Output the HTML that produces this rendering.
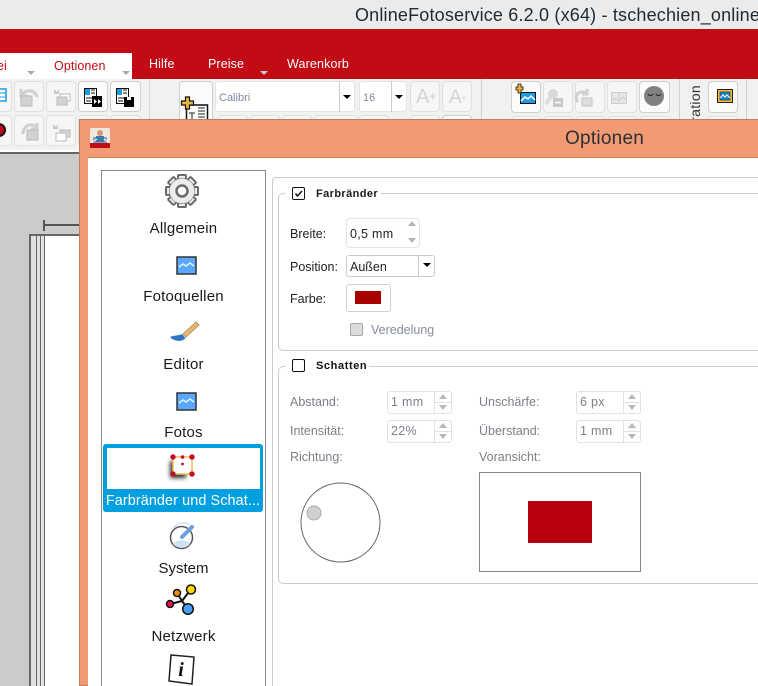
<!DOCTYPE html>
<html><head><meta charset="utf-8"><title>Optionen</title>
<style>
html,body{margin:0;padding:0;width:758px;height:686px;overflow:hidden}
body{position:relative;background:#cbcbcb;font-family:"Liberation Sans",sans-serif;color:#222}
#r{position:absolute;left:0;top:0;width:758px;height:686px;overflow:hidden;background:#cbcbcb}
#r div,#r svg{position:absolute;box-sizing:border-box}
.t{white-space:nowrap;line-height:16px;height:16px;font-size:12.5px}
.g{color:#7c8088}
.b{background:#f6f6f6;border:1px solid #e0e0e0;border-radius:4px}
.b2{background:#fbfbfb;border:1px solid #cfcfcf;border-radius:4px}
.item{white-space:nowrap;line-height:18px;height:18px;font-size:15px;text-align:center;left:102px;width:163px;color:#1a1a1a;letter-spacing:.2px}
.spin{background:#fff;border:1px solid #e2e2e2;border-radius:3px;height:23px;width:65px}
.grp{border:1px solid #ccc;border-radius:5px;left:278px;width:500px}
.cb{width:13px;height:13px;border:1.5px solid #111;border-radius:2px;background:#fff;left:292px}
.leg{background:#fff;height:14px}
</style></head><body><div id="r">
<div style="left:0;top:0;width:758px;height:29px;background:#ebebeb"></div>
<div class="t" style="left:355px;top:6px;height:18px;line-height:18px;font-size:18px;color:#1f2a33;letter-spacing:.18px">OnlineFotoservice 6.2.0 (x64) - tschechien_online</div>
<div style="left:0;top:29px;width:758px;height:50px;background:#c30b15"></div>
<div style="left:0;top:53px;width:132px;height:26px;background:#fff"></div>
<div class="t" style="left:-3px;top:58px;color:#c30b15;letter-spacing:.1px">ei</div>
<div class="t" style="left:54px;top:58px;color:#c30b15;letter-spacing:.1px">Optionen</div>
<div class="t" style="left:149px;top:56px;color:#fff;letter-spacing:.1px">Hilfe</div>
<div class="t" style="left:208px;top:56px;color:#fff;letter-spacing:.1px">Preise</div>
<div class="t" style="left:287px;top:56px;color:#fff;letter-spacing:.15px">Warenkorb</div>
<svg style="left:0;top:68px" width="280" height="9"><path d="M27 3h8l-4 4zM122 3h8l-4 4z" fill="#aaa"/><path d="M260 3h8l-4 4z" fill="#c9c9c9"/></svg>

<div style="left:0;top:79px;width:758px;height:71px;background:#f1f1f1"></div>
<div style="left:0;top:150px;width:79px;height:2px;background:#fff"></div>
<div style="left:0;top:152px;width:79px;height:2px;background:#666"></div>
<div style="left:149px;top:79px;width:1px;height:40px;background:#d8d8d8"></div>
<div style="left:481px;top:79px;width:1px;height:40px;background:#d0d0d0"></div>
<div style="left:679px;top:79px;width:1px;height:40px;background:#d0d0d0"></div>
<div style="left:746px;top:79px;width:1px;height:40px;background:#d0d0d0"></div>

<div class="b" style="left:-4px;top:81px;width:16px;height:31px"></div>
<div class="b" style="left:14px;top:81px;width:30px;height:31px"></div>
<div class="b" style="left:46px;top:81px;width:30px;height:31px"></div>
<div class="b2" style="left:78px;top:81px;width:30px;height:31px"></div>
<div class="b2" style="left:110px;top:81px;width:31px;height:31px"></div>
<div class="b" style="left:-4px;top:115px;width:16px;height:31px"></div>
<div class="b" style="left:14px;top:115px;width:30px;height:31px"></div>
<div class="b" style="left:46px;top:115px;width:30px;height:31px"></div>
<div class="b" style="left:78px;top:115px;width:30px;height:31px"></div>
<div class="b" style="left:110px;top:115px;width:31px;height:31px"></div>
<svg style="left:0;top:80px" width="145" height="70">
<path d="M0 9h6v12H0" fill="#fff" stroke="#1c9be0" stroke-width="1.5"/><path d="M0 13h6M0 17h6" stroke="#1c9be0"/>
<path d="M21 9v7h7M22 15c3-6 13-6 15 2" fill="none" stroke="#cfcfcf" stroke-width="3"/><rect x="21" y="16" width="11" height="10" fill="#d2d2d2" stroke="#bbb"/>
<rect x="60" y="14" width="10" height="7" fill="#fff" stroke="#bbb"/><rect x="57" y="17" width="10" height="8" fill="#d4d4d4" stroke="#bbb"/><path d="M54 9l3 3 2-3v5h-5z" fill="#c8c8c8"/>
<rect x="84.500" y="8.500" width="12" height="15" fill="#fff" stroke="#111"/><rect x="85" y="9" width="5" height="6" fill="#1c9be0"/><path d="M91 10h4M91 13h4M86 18h6M86 21h5" stroke="#111"/><rect x="92" y="16" width="10" height="11" fill="#000"/><path d="M94 19l3 2.500-3 2.500zM98 19l3 2.500-3 2.500z" fill="#fff"/>
<rect x="116.500" y="8.500" width="12" height="15" fill="#fff" stroke="#111"/><rect x="117" y="9" width="5" height="6" fill="#1c9be0"/><path d="M123 10h4M123 13h4M118 18h6M118 21h5" stroke="#111"/><rect x="124" y="17" width="10" height="10" fill="#000"/><rect x="127" y="17" width="4" height="3" fill="#fff"/>
<circle cx="-1" cy="50" r="6" fill="#c30b15" stroke="#111" stroke-width="2"/>
<path d="M23 54c0-9 9-12 14-6M37 43v6h-6" fill="none" stroke="#cfcfcf" stroke-width="3"/><rect x="27" y="50" width="11" height="10" fill="#d2d2d2" stroke="#bbb"/>
<rect x="60" y="50" width="10" height="7" fill="#d4d4d4" stroke="#bbb"/><rect x="56" y="53" width="10" height="8" fill="#fff" stroke="#bbb"/><path d="M53 44l3 3 2-3v5h-5z" fill="#c8c8c8"/>
</svg>

<div class="b2" style="left:179px;top:81px;width:34px;height:60px"></div>
<svg style="left:180px;top:96px" width="32" height="24">
<rect x="6.500" y="9" width="21" height="16" fill="#fff" stroke="#111" stroke-width="1.500"/><path d="M18 12h7M18 15h7M18 18h7M18 21h7M9 17h6M12 17v6" stroke="#222"/>
<path d="M5.500 1h4v4h4v4h-4v4h-4v-4h-4v-4h4z" fill="#f0b83a" stroke="#111" stroke-width="1.200"/>
</svg>
<div style="left:215px;top:81px;width:140px;height:31px;background:#fff;border:1px solid #e4e4e4;border-radius:3px"></div>
<div style="left:339px;top:81px;width:1px;height:31px;background:#ccc"></div>
<div class="t" style="left:219px;top:90px;font-size:11px;color:#8188a0">Calibri</div>
<div style="left:359px;top:81px;width:48px;height:31px;background:#fff;border:1px solid #e4e4e4;border-radius:3px"></div>
<div style="left:391px;top:81px;width:1px;height:31px;background:#ccc"></div>
<div class="t" style="left:363px;top:90px;font-size:11px;color:#8188a0">16</div>
<svg style="left:340px;top:90px" width="70" height="12"><path d="M3 5h8l-4 4zM55 5h8l-4 4z" fill="#000"/></svg>
<div class="b" style="left:410px;top:81px;width:30px;height:31px"></div>
<div class="b" style="left:442px;top:81px;width:30px;height:31px"></div>
<div class="t" style="left:416px;top:87px;height:20px;line-height:20px;font-size:20px;color:#d4d4d4">A<span style="font-size:11px;font-weight:bold;vertical-align:3px">+</span></div>
<div class="t" style="left:449px;top:87px;height:20px;line-height:20px;font-size:19px;color:#d4d4d4">A<span style="font-size:12px;font-weight:bold;vertical-align:2px">-</span></div>
<div class="b" style="left:218px;top:115px;width:30px;height:31px"></div>
<div class="b" style="left:250px;top:115px;width:30px;height:31px"></div>
<div class="b" style="left:282px;top:115px;width:30px;height:31px"></div>
<div class="b" style="left:314px;top:115px;width:44px;height:31px"></div>
<div class="b" style="left:359px;top:115px;width:30px;height:31px"></div>
<div class="b" style="left:410px;top:115px;width:30px;height:31px"></div>
<div class="b2" style="left:442px;top:115px;width:30px;height:31px"></div>

<div class="b2" style="left:511px;top:81px;width:30px;height:32px"></div>
<div class="b" style="left:543px;top:81px;width:30px;height:32px"></div>
<div class="b" style="left:575px;top:81px;width:30px;height:32px"></div>
<div class="b" style="left:607px;top:81px;width:30px;height:32px"></div>
<div class="b2" style="left:639px;top:81px;width:31px;height:32px"></div>
<div class="b2" style="left:708px;top:81px;width:30px;height:32px"></div>
<div class="b" style="left:511px;top:116px;width:30px;height:31px"></div>
<div class="b" style="left:543px;top:116px;width:30px;height:31px"></div>
<div class="b" style="left:575px;top:116px;width:30px;height:31px"></div>
<div class="b" style="left:607px;top:116px;width:30px;height:31px"></div>
<div class="b" style="left:639px;top:116px;width:31px;height:31px"></div>
<div class="b" style="left:708px;top:116px;width:30px;height:31px"></div>
<svg style="left:510px;top:80px" width="240" height="36">
<rect x="10.500" y="12.500" width="15" height="11" fill="#1c9be0" stroke="#111"/><path d="M11 21l4-4 3 2 3-3 4 4" fill="none" stroke="#fff" stroke-width="1.500"/>
<path d="M6 7h2V4h3v3h2v3h-2v3H8v-3H6z" fill="#f0b83a" stroke="#111" stroke-width=".8"/>
<circle cx="43" cy="14" r="5" fill="#d8d8d8"/><path d="M36 24l4-6" stroke="#ddd" stroke-width="4"/><rect x="43" y="18" width="10" height="9" fill="#c8c8c8"/><path d="M45 22.500h6" stroke="#fff" stroke-width="1.500"/>
<path d="M68 22c-5-7 1-12 8-9M77 9v5h-5" fill="none" stroke="#d0d0d0" stroke-width="3"/><rect x="72" y="18" width="10" height="8" fill="#ddd" stroke="#c4c4c4"/>
<rect x="101.500" y="12.500" width="15" height="11" fill="#e6e6e6" stroke="#cdcdcd"/><path d="M109 12v12M102 21l3-3 3 2M110 20l3-3 3 3" fill="none" stroke="#cdcdcd"/>
<circle cx="144" cy="16" r="10" fill="#808080"/><path d="M138 14c1 2 4 2 5 0M146 14c1 2 4 2 5 0" fill="none" stroke="#222" stroke-width=".9"/>
<rect x="207.500" y="9.500" width="15" height="13" fill="#f0b83a" stroke="#222"/><rect x="210" y="12" width="10" height="8" fill="#1c85d0" stroke="#222" stroke-width=".6"/><path d="M210 18l3-3 2 2 2-2 3 3" fill="none" stroke="#fff"/>
</svg>
<div class="t" style="width:42px;text-align:right;font-size:14px;transform:rotate(-90deg);left:674px;top:98px;color:#333;letter-spacing:.3px">ration</div>

<!-- canvas -->
<div style="left:45px;top:236px;width:34px;height:450px;background:#fff"></div>
<div style="left:31px;top:236px;width:13px;height:450px;background:#e2e2e2"></div>
<div style="left:29px;top:234px;width:2px;height:452px;background:#666"></div>
<div style="left:36px;top:235px;width:1px;height:451px;background:#666"></div>
<div style="left:40px;top:235px;width:1px;height:451px;background:#666"></div>
<div style="left:44px;top:235px;width:1px;height:451px;background:#666"></div>
<div style="left:29px;top:234px;width:50px;height:2px;background:#666"></div>
<div style="left:43px;top:220px;width:2px;height:11px;background:#555"></div>
<div style="left:44px;top:224px;width:35px;height:2px;background:#555"></div>

<!-- dialog -->
<div style="left:79px;top:119px;width:680px;height:567px;background:#f29a74;border:1px solid #c97c5b"></div>
<div class="t" style="left:565px;top:129px;height:20px;line-height:20px;font-size:19px;color:#2c3035;letter-spacing:.25px">Optionen</div>
<div style="left:90px;top:128px;width:20px;height:20px;background:#f2e8df;border-radius:2px 2px 0 0"></div>
<svg style="left:90px;top:128px" width="20" height="20"><rect y="15" width="20" height="5" fill="#c30b15"/><rect x="3" y="9" width="14" height="6" fill="#7ea0bd"/><circle cx="10" cy="5" r="3" fill="#d19a78"/><path d="M6 8h8v6H6z" fill="#3f78a8"/><path d="M2 14l5-3M18 14l-4-3" stroke="#fff"/></svg>
<div style="left:88px;top:157px;width:670px;height:529px;background:#fff;border-top:1px solid #c97c5b"></div>

<!-- list -->
<div style="left:101px;top:170px;width:165px;height:520px;border:1px solid #8a8a94;background:#fff"></div>
<svg style="left:162px;top:171px" width="40" height="40">
<g transform="translate(20 20)" fill="#ececec" stroke="#6a6a6a" stroke-width="2">
<rect x="-4" y="-16" width="8" height="8" rx="1"/><rect x="-4" y="-16" width="8" height="8" rx="1" transform="rotate(45)"/><rect x="-4" y="-16" width="8" height="8" rx="1" transform="rotate(90)"/><rect x="-4" y="-16" width="8" height="8" rx="1" transform="rotate(135)"/><rect x="-4" y="-16" width="8" height="8" rx="1" transform="rotate(180)"/><rect x="-4" y="-16" width="8" height="8" rx="1" transform="rotate(225)"/><rect x="-4" y="-16" width="8" height="8" rx="1" transform="rotate(270)"/><rect x="-4" y="-16" width="8" height="8" rx="1" transform="rotate(315)"/>
<circle r="12"/><circle r="12.500" stroke="none" fill="#ececec"/><circle r="5.500" fill="#fff" stroke-width="2.500"/>
</g></svg>
<div class="item" style="top:220px">Allgemein</div>
<svg style="left:176px;top:256px" width="21" height="19"><rect x="1" y="1" width="19" height="17" fill="#5aa8ff" stroke="#333" stroke-width="1.500"/><path d="M3 11l4-3 3 2 4-3 4 3" fill="none" stroke="#e4f2ff" stroke-width="1.500"/></svg>
<div class="item" style="top:288px">Fotoquellen</div>
<svg style="left:168px;top:320px" width="32" height="24"><path d="M15 14L28 2l3 3-13 12z" fill="#e8b870" stroke="#a98348" stroke-width=".8"/><path d="M2 17c4-2 8-1 12-3l3.500 4c-3 4-11 4-15.500-1z" fill="#2f75c2"/></svg>
<div class="item" style="top:356px">Editor</div>
<svg style="left:176px;top:392px" width="21" height="19"><rect x="1" y="1" width="19" height="17" fill="#5aa8ff" stroke="#333" stroke-width="1.500"/><path d="M3 11l4-3 3 2 4-3 4 3" fill="none" stroke="#e4f2ff" stroke-width="1.500"/></svg>
<div class="item" style="top:424px">Fotos</div>

<div style="left:103px;top:444px;width:160px;height:68px;background:#00a0e0;border-radius:3px"></div>
<div style="left:107px;top:448px;width:153px;height:41px;background:#fff"></div>
<svg style="left:163px;top:452px" width="36" height="32"><defs><filter id="f" x="-50%" y="-50%" width="200%" height="200%"><feGaussianBlur stdDeviation="2"/></filter></defs>
<rect x="7" y="9" width="16" height="17" fill="#333" filter="url(#f)"/><rect x="10" y="5" width="19" height="17" fill="#fff" stroke="#f4bf45" stroke-width="1.500"/>
<g fill="#c30b25"><circle cx="10" cy="5" r="2.700"/><circle cx="29" cy="5" r="2.700"/><circle cx="10" cy="22" r="2.700"/><circle cx="29" cy="22" r="2.700"/><circle cx="19.500" cy="5" r="1.800"/><circle cx="19.500" cy="12" r="1.400"/></g></svg>
<div class="item" style="top:492px;color:#fff;left:103px;width:160px;font-size:14.4px;letter-spacing:.1px">Farbränder und Schat...</div>

<svg style="left:168px;top:521px" width="30" height="30"><path d="M5 7c4-5 13-7 17-3" fill="none" stroke="#cfe3f7" stroke-width="1.500"/><circle cx="13.500" cy="16.500" r="11" fill="#fff" stroke="#555" stroke-width="1.500"/><path d="M5 23c3-5 14-5 17 0-4 5-13 5-17 0z" fill="#cde2f5"/><path d="M14 16L24 6" stroke="#6f9fd8" stroke-width="4" stroke-linecap="round"/></svg>
<div class="item" style="top:560px;letter-spacing:0">System</div>
<svg style="left:164px;top:584px" width="34" height="32"><path d="M18 17L13 9M18 17L27 5M18 17L24 25M18 17L6 20" stroke="#111" stroke-width="2"/><circle cx="13" cy="9" r="3.500" fill="#f08a10" stroke="#111" stroke-width="1.500"/><circle cx="27" cy="5.500" r="4.500" fill="#ffd800" stroke="#111" stroke-width="1.500"/><circle cx="6" cy="20" r="3.500" fill="#e8104e" stroke="#111" stroke-width="1.500"/><circle cx="24" cy="25" r="5.300" fill="#4aa0f5" stroke="#111" stroke-width="1.500"/></svg>
<div class="item" style="top:628px">Netzwerk</div>
<svg style="left:166px;top:653px" width="32" height="33"><path d="M5 2L28 4 26 31 3 28z" fill="#fff" stroke="#222" stroke-width="1.500"/></svg>
<div style="left:173px;top:657px;width:16px;height:26px;text-align:center;font:italic bold 20px/26px 'Liberation Serif',serif;color:#111">i</div>

<!-- outer panel -->
<div style="left:272px;top:177px;width:500px;height:530px;border:1px solid #ccc;border-radius:4px"></div>

<!-- Farbraender -->
<div class="grp" style="top:193px;height:158px"></div>
<div class="leg" style="left:285px;top:186px;width:96px"></div>
<div class="cb" style="top:187px"></div>
<svg style="left:292px;top:187px" width="13" height="13"><path d="M3.500 6.500l2 2.500 4.500-5" fill="none" stroke="#111" stroke-width="1.500"/></svg>
<div class="t" style="left:316px;top:186px;font-size:11px;font-weight:bold;color:#1a1a1a;letter-spacing:.4px">Farbränder</div>
<div class="t" style="left:290px;top:226px">Breite:</div>
<div style="left:346px;top:218px;width:74px;height:30px;border:1px solid #e4e4e4;border-radius:4px;background:#fff"></div>
<div class="t" style="left:350px;top:226px;letter-spacing:.3px">0,5 mm</div>
<svg style="left:406px;top:220px" width="12" height="26"><path d="M6 1l4 5H2z" fill="#b4b4b4"/><path d="M2 18h8l-4 5z" fill="#b4b4b4"/></svg>
<div class="t" style="left:290px;top:259px">Position:</div>
<div style="left:346px;top:255px;width:89px;height:22px;border:1px solid #ccc;border-radius:3px;background:#fff"></div>
<div style="left:418px;top:255px;width:1px;height:22px;background:#ccc"></div>
<div class="t" style="left:350px;top:259px">Außen</div>
<svg style="left:421px;top:260px" width="12" height="10"><path d="M2 3h8l-4 4z" fill="#000"/></svg>
<div class="t" style="left:290px;top:291px">Farbe:</div>
<div style="left:346px;top:284px;width:45px;height:28px;border:1px solid #d0d0d0;border-radius:3px;background:#fff"></div>
<div style="left:355px;top:291px;width:26px;height:13px;background:#a80000"></div>
<div style="left:350px;top:323px;width:13px;height:13px;border:1px solid #a8a8a8;border-radius:2px;background:#dcdcdc"></div>
<div class="t g" style="left:371px;top:322px;color:#868c9c">Veredelung</div>

<!-- Schatten -->
<div class="grp" style="top:366px;height:218px"></div>
<div class="leg" style="left:285px;top:359px;width:84px"></div>
<div class="cb" style="top:359px"></div>
<div class="t" style="left:316px;top:358px;font-size:11px;font-weight:bold;color:#111;letter-spacing:.6px">Schatten</div>

<div class="t g" style="left:290px;top:394px">Abstand:</div>
<div class="spin" style="left:387px;top:391px"></div>
<div class="t g" style="left:391px;top:394px;letter-spacing:.3px">1 mm</div>
<div class="t g" style="left:290px;top:423px">Intensität:</div>
<div class="spin" style="left:387px;top:420px"></div>
<div class="t g" style="left:391px;top:423px;letter-spacing:.3px">22%</div>
<div class="t g" style="left:290px;top:449px">Richtung:</div>
<div class="t g" style="left:479px;top:394px">Unschärfe:</div>
<div class="spin" style="left:576px;top:391px"></div>
<div class="t g" style="left:580px;top:394px;letter-spacing:.3px">6 px</div>
<div class="t g" style="left:479px;top:423px">Überstand:</div>
<div class="spin" style="left:576px;top:420px"></div>
<div class="t g" style="left:580px;top:423px;letter-spacing:.3px">1 mm</div>
<div class="t g" style="left:479px;top:449px">Voransicht:</div>
<svg style="left:434px;top:391px" width="210" height="52">
<g fill="none" stroke="#e2e2e2"><path d="M.5 0v23M.5 11.500h17"/><path d="M.5 29v23M.5 40.500h17"/></g>
<g fill="none" stroke="#e2e2e2" transform="translate(189 0)"><path d="M.5 0v23M.5 11.500h17"/><path d="M.5 29v23M.5 40.500h17"/></g>
<path d="M9 3l4 5H5zM5 14h8l-4 5zM9 32l4 5H5zM5 43h8l-4 5z" fill="#b8b8b8"/>
<path d="M198 3l4 5h-8zM194 14h8l-4 5zM198 32l4 5h-8zM194 43h8l-4 5z" fill="#b8b8b8"/>
</svg>
<svg style="left:298px;top:480px" width="86" height="86"><circle cx="42.500" cy="42.500" r="39.500" fill="#fff" stroke="#666"/><circle cx="16" cy="33" r="7" fill="#d0d0d0" stroke="#aaa"/></svg>
<div style="left:479px;top:472px;width:162px;height:100px;border:1px solid #84848c;background:#fff"></div>
<div style="left:528px;top:501px;width:64px;height:42px;background:#b8000f"></div>
</div></body></html>
